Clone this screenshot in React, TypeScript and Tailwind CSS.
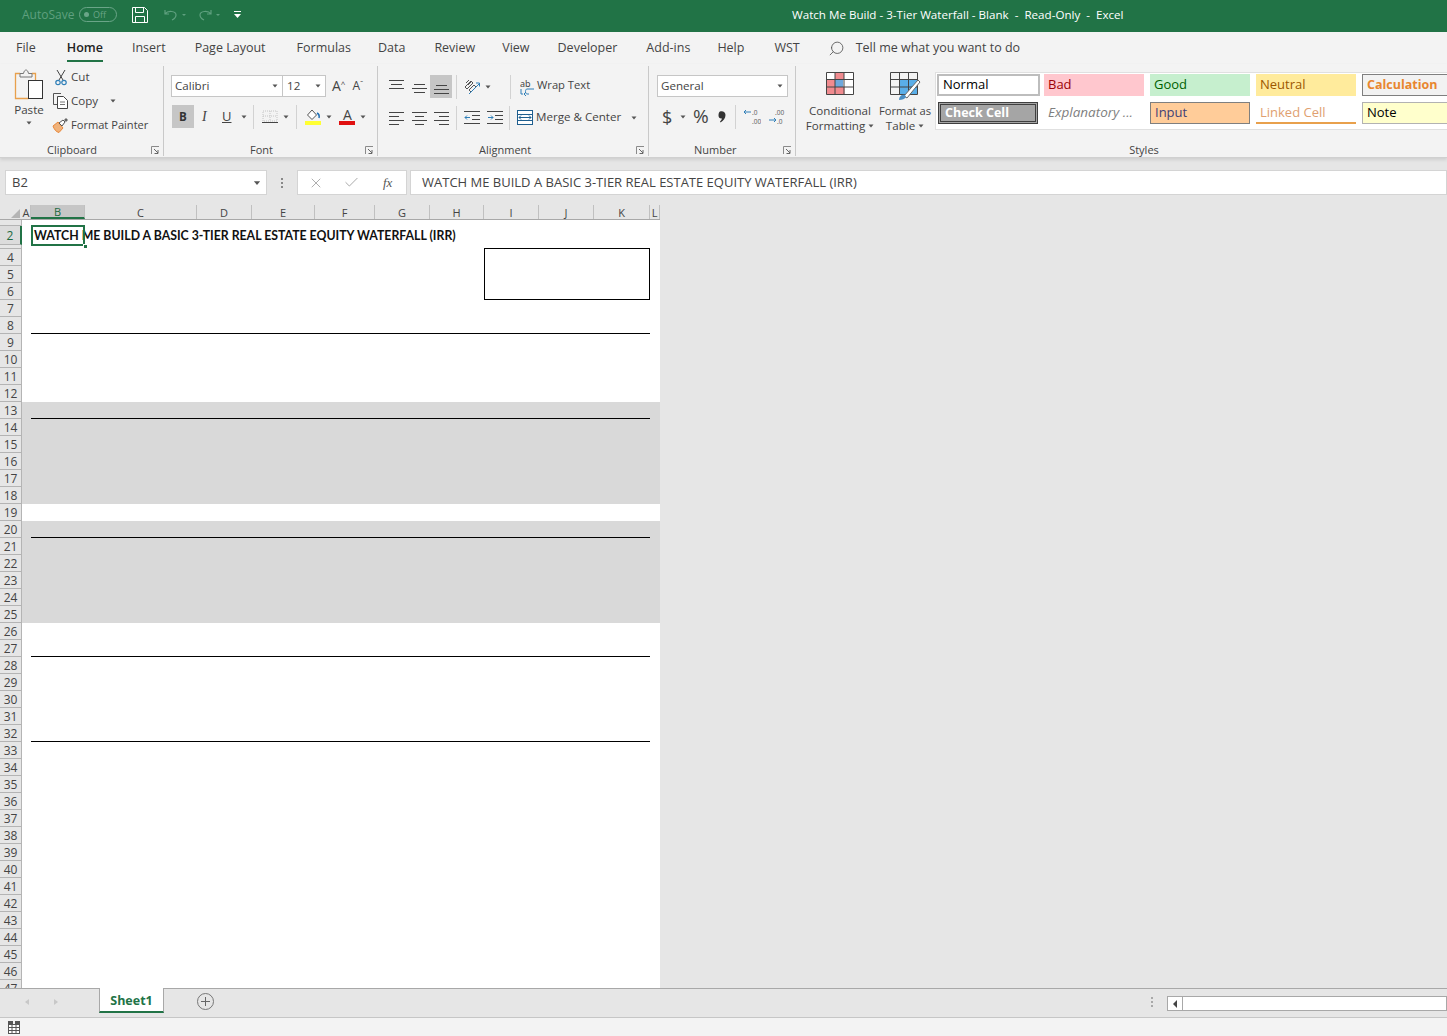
import type { ReactNode } from 'react';
import { Search, X, Check } from 'lucide-react';

const tabs = [
  { name: 'File', gap: 'ml-4' },
  { name: 'Home', gap: 'ml-[31px]' },
  { name: 'Insert', gap: 'ml-[29px]' },
  { name: 'Page Layout', gap: 'ml-[29px]' },
  { name: 'Formulas', gap: 'ml-[31px]' },
  { name: 'Data', gap: 'ml-[27px]' },
  { name: 'Review', gap: 'ml-[29px]' },
  { name: 'View', gap: 'ml-[27px]' },
  { name: 'Developer', gap: 'ml-7' },
  { name: 'Add-ins', gap: 'ml-[29px]' },
  { name: 'Help', gap: 'ml-[27px]' },
  { name: 'WST', gap: 'ml-[30px]' },
];

const columns = [
  { name: 'A', w: 'w-[9px]' },
  { name: 'B', w: 'w-[54px]' },
  { name: 'C', w: 'w-[112px]' },
  { name: 'D', w: 'w-[55px]' },
  { name: 'E', w: 'w-[63px]' },
  { name: 'F', w: 'w-[60px]' },
  { name: 'G', w: 'w-[55px]' },
  { name: 'H', w: 'w-[54px]' },
  { name: 'I', w: 'w-[55px]' },
  { name: 'J', w: 'w-[55px]' },
  { name: 'K', w: 'w-[56px]' },
  { name: 'L', w: 'w-[10px]' },
];

const underlined = [8, 13, 20, 27, 32];
const rowNumbers = Array.from({ length: 44 }, (_, i) => i + 4);

function Caret({ className = '' }: { className?: string }) {
  return (
    <svg width="6" height="4" viewBox="0 0 6 4" className={`shrink-0 ${className}`}>
      <path d="M0.5 0.5h5L3 3.5z" fill="#555" />
    </svg>
  );
}

function Launcher({ className = '' }: { className?: string }) {
  return (
    <svg width="9" height="9" viewBox="0 0 9 9" className={`shrink-0 ${className}`}>
      <path d="M0.5 8V0.5H8" fill="none" stroke="#8a8a8a" />
      <path d="M3 3l4 4M7 4v3.5H3.5" fill="none" stroke="#666" />
    </svg>
  );
}

function Sep({ className = '' }: { className?: string }) {
  return <div className={`h-[24px] w-px shrink-0 bg-[#d2d2d2] ${className}`} />;
}

function Lines({ pattern, y = 0 }: { pattern: [number, number][]; y?: number }) {
  return (
    <svg width="15" height="14" viewBox="0 0 15 14" className="shrink-0">
      {pattern.map(([x, w], i) => (
        <rect key={i} x={x} y={y + i * 4} width={w} height="1" fill="#444" />
      ))}
    </svg>
  );
}

function PasteIcon() {
  return (
    <svg width="30" height="32" viewBox="0 0 30 32">
      <path d="M6 4.500H1.500v25h13M18 4.500h3.500v7" fill="none" stroke="#e8a04c" strokeWidth="1.3" />
      <path d="M6 8V4.500h3.500C10 2 11 1 12 1s2 1 2.500 3.500H18V8z" fill="#f3f3f3" stroke="#777" />
      <rect x="14.500" y="11.500" width="14" height="18" fill="#fff" stroke="#333" />
    </svg>
  );
}

function CutIcon() {
  return (
    <svg width="12" height="17" viewBox="0 0 12 17">
      <path d="M2 1l6 10M10 1L4 11" stroke="#444" fill="none" />
      <circle cx="3" cy="13.500" r="2.200" fill="none" stroke="#2f7fb8" strokeWidth="1.200" />
      <circle cx="9" cy="13.500" r="2.200" fill="none" stroke="#2f7fb8" strokeWidth="1.200" />
    </svg>
  );
}

function CopyIcon() {
  return (
    <svg width="17" height="16" viewBox="0 0 17 16">
      <path d="M9 0.500H1.500v11H5" fill="none" stroke="#555" />
      <path d="M5.500 3.500h6l4 4v8h-10z" fill="#fff" stroke="#444" />
      <path d="M8 9h5M8 11.500h5" stroke="#777" />
    </svg>
  );
}

function PainterIcon() {
  return (
    <svg width="17" height="16" viewBox="0 0 17 16">
      <path d="M1 9l5-4 5 6-4 4.500C4 15 2 12 1 9z" fill="#f0b27a" stroke="#e8873a" />
      <path d="M7 6l4-3 2 2-3 4z" fill="#fff" stroke="#555" />
      <path d="M12 3l2-2 2 2-2 2z" fill="#666" />
    </svg>
  );
}

function BorderIcon() {
  return (
    <svg width="16" height="14" viewBox="0 0 16 14">
      <path d="M1 1h14v10H1zM8 1v10M1 6h14" fill="none" stroke="#c4c4c4" strokeDasharray="1 1" />
      <rect x="0" y="12" width="16" height="1" fill="#444" />
    </svg>
  );
}

function FillIcon() {
  return (
    <svg width="16" height="16" viewBox="0 0 16 16">
      <path d="M7 1L2.500 6 7 10.500 11.500 6z" fill="#fff" stroke="#555" />
      <path d="M12 4c2 1 2.500 3 2 5" fill="none" stroke="#1f6fb5" strokeWidth="1.500" />
      <rect x="0" y="12" width="16" height="4" fill="#ffff33" />
    </svg>
  );
}

function OrientIcon() {
  return (
    <svg width="17" height="16" viewBox="0 0 17 16">
      <path d="M1 8l6-6 2 2-6 6zM5 11l5-5 2 2-5 5z" fill="none" stroke="#555" />
      <path d="M2 4l3-3M4 6l3-3" stroke="#555" />
      <path d="M5 15L15 5M12 4h3.500v3.500" fill="none" stroke="#2f7fb8" />
    </svg>
  );
}

function IndentIcon({ flip = false }: { flip?: boolean }) {
  return (
    <svg width="16" height="13" viewBox="0 0 16 13">
      <path d="M0 0.500h16M8 4.500h8M8 8.500h8M0 12.500h16" stroke="#444" />
      <path d={flip ? 'M1 6.500h5M4 4.500l2 2-2 2' : 'M6 6.500H1M3 4.500l-2 2 2 2'} fill="none" stroke="#2f7fb8" />
    </svg>
  );
}

function WrapIcon() {
  return (
    <svg width="15" height="18" viewBox="0 0 15 18">
      <text x="0" y="9" fontSize="9" fill="#444" fontFamily="Noto Sans">ab</text>
      <path d="M1 11v5h2M14 11H7c-2 0-2 5 0 5h2M6 14l-2 2 2 2" fill="none" stroke="#2f7fb8" />
    </svg>
  );
}

function MergeIcon() {
  return (
    <svg width="16" height="15" viewBox="0 0 16 15">
      <rect x="0.500" y="0.500" width="15" height="14" fill="#fff" stroke="#1f5f8f" />
      <path d="M0.500 4.500h15M0.500 10.500h15" stroke="#1f5f8f" />
      <path d="M2 7.500h12M4 5.500l-2 2 2 2M12 5.500l2 2-2 2" fill="none" stroke="#1f5f8f" />
    </svg>
  );
}

function DecimalIcon({ more = false }: { more?: boolean }) {
  return (
    <svg width="17" height="19" viewBox="0 0 17 19">
      <text x={more ? 6 : 8} y="7.500" fontSize="6.500" fill="#666" fontFamily="Noto Sans">{more ? '.00' : '.0'}</text>
      <text x="8" y="16.500" fontSize="6.500" fill="#666" fontFamily="Noto Sans">{more ? '.0' : '.00'}</text>
      <path d={more ? 'M0 13h7M5 11l2 2-2 2' : 'M7 5H0M2 3L0 5l2 2'} fill="none" stroke="#2f7fb8" />
    </svg>
  );
}

function CommaIcon() {
  return (
    <svg width="8" height="12" viewBox="0 0 8 12">
      <path d="M2 0.500c3-1 5.500 1 5.500 3.500 0 3-2 6-5 7.500L2 10.500c1-1 1.800-2 2-3C2 8 0.500 6.500 0.500 4.500 0.500 2.500 1 1 2 0.500z" fill="#333" />
    </svg>
  );
}

function CondIcon() {
  return (
    <svg width="28" height="23" viewBox="0 0 28 23">
      <rect x="0.500" y="0.500" width="27" height="22" fill="#fff" />
      <path d="M9 0.500h9v7H9zM0.500 15h18v7.500H0.500zM0.500 7.500h9V15h-9z" fill="#f08b8f" />
      <rect x="9" y="7.500" width="8" height="7.500" fill="#6fa8dc" />
      <path d="M0.500 0.500h27v22H0.500zM0.500 7.500h27M0.500 15h27M9 0.500v22M18 0.500v22" fill="none" stroke="#444" />
    </svg>
  );
}

function TableIcon() {
  return (
    <svg width="31" height="29" viewBox="0 0 31 29">
      <path d="M10 8h18v14H10z" fill="#5aaee8" />
      <path d="M0.500 0.500h27v22H0.500zM0.500 7.500h27M0.500 15h27M9.500 0.500v22M18.500 0.500v22" fill="none" stroke="#444" />
      <path d="M14 24L28 8l2 2-13 16z" fill="#fff" stroke="#666" />
      <path d="M9 28c0-4 3-6 6-5l1 2c-1 2-4 3-7 3z" fill="#4a8fc4" />
    </svg>
  );
}

function Group({ w, label, labelClass = '', launcher, children }: { w: string; label: string; labelClass?: string; launcher?: string; children: ReactNode }) {
  return (
    <div className={`${w} mb-[1px] mt-[2px] flex shrink-0 flex-col border-r border-[#c9c9c9]`}>
      <div className="h-[78px]">{children}</div>
      <div className={`flex h-[13px] items-center pt-[2px] text-[11px] ${labelClass}`}>
        <span>{label}</span>
        {launcher && <Launcher className={launcher} />}
      </div>
    </div>
  );
}

const styleCells = [
  { text: 'Normal', cls: 'bg-white text-black border-2 border-[#bdbdbd] -ml-px !w-[103px]' },
  { text: 'Bad', cls: 'bg-[#ffc7ce] text-[#9c0006]' },
  { text: 'Good', cls: 'bg-[#c6efce] text-[#006100]' },
  { text: 'Neutral', cls: 'bg-[#ffeb9c] text-[#9c5700]' },
  { text: 'Calculation', cls: 'bg-[#f2f2f2] text-[#e8862f] text-[12.5px] font-bold border border-[#7f7f7f]' },
  { text: 'Check Cell', cls: 'bg-[#a5a5a5] text-white text-[12.5px] font-bold border-[3px] border-double border-[#3f3f3f]' },
  { text: 'Explanatory ...', cls: 'italic text-[#7f7f7f] text-[13.5px] pb-[2px]' },
  { text: 'Input', cls: 'bg-[#ffcc99] text-[#3f3f76] border border-[#7f7f7f]' },
  { text: 'Linked Cell', cls: 'text-[#e0a070] pt-[2px] border-b-2 border-[#e8a04c]' },
  { text: 'Note', cls: 'bg-[#ffffcc] text-black border border-[#b2b2b2]' },
];

function SheetRow({ n }: { n: number }) {
  const grey = (n >= 13 && n <= 18) || (n >= 20 && n <= 25);
  return (
    <div className="flex h-[17px] shrink-0">
      <div className="flex w-[22px] shrink-0 items-center justify-center border-r border-b border-[#b4b4b4] bg-[#e6e6e6] pt-[1px] text-[12px] leading-none text-[#444]">
        {n}
      </div>
      <div className={`min-w-0 flex-1 ${grey ? 'bg-[#d9d9d9]' : 'bg-white'}`}>
        {underlined.includes(n) && <div className="ml-[9px] h-full w-[619px] border-b border-black" />}
        {n === 4 && <div className="-mt-px ml-[462px] h-[18px] w-[166px] border-x border-t border-black" />}
        {n === 5 && <div className="ml-[462px] h-full w-[166px] border-x border-black" />}
        {n === 6 && <div className="ml-[462px] h-full w-[166px] border-x border-b border-black" />}
      </div>
    </div>
  );
}

export default function App() {
  return (
    <div className="flex h-screen w-full flex-col overflow-hidden bg-[#e6e6e6] font-['Open_Sans',sans-serif] text-[#444]">
      {/* title bar */}
      <div className="flex h-8 shrink-0 items-center bg-[#217346] pb-[3px] text-white">
        <span className="ml-[22px] w-[53px] text-[12px] text-[#5fa07f]">AutoSave</span>
        <div className="ml-[4px] flex h-[15px] w-[38px] items-center gap-1 rounded-full border border-[#6aa588] pl-1 text-[9px] text-[#6aa588]">
          <span className="h-[5px] w-[5px] rounded-full bg-[#6aa588]" />
          Off
        </div>
        <svg width="16" height="16" viewBox="0 0 16 16" className="ml-[15px]">
          <path d="M0.500 0.500h12l3 3v12H0.500zM3.500 0.500v5h8v-5M3.500 15.500v-6h9v6" fill="none" stroke="#fff" />
        </svg>
        <svg width="24" height="12" viewBox="0 0 24 12" className="ml-[15px] text-[#5fa07f]">
          <path d="M2 1v4h4M2 5c3-4 11-3 11 1 0 2-2 4-4 5" fill="none" stroke="currentColor" strokeWidth="1.200" />
          <path d="M19 5h4l-2 2z" fill="currentColor" />
        </svg>
        <svg width="24" height="12" viewBox="0 0 24 12" className="ml-[10px] text-[#5fa07f]">
          <path d="M14 1v4h-4M14 5C11 1 3 2 3 6c0 2 2 4 4 5" fill="none" stroke="currentColor" strokeWidth="1.200" />
          <path d="M19 5h4l-2 2z" fill="currentColor" />
        </svg>
        <svg width="7" height="8" viewBox="0 0 7 8" className="ml-[13px]">
          <path d="M0 0h7v1H0zM0 3h7L3.500 7z" fill="#fff" />
        </svg>
        <span className="ml-[551px] whitespace-pre text-[11.6px] text-white">Watch Me Build - 3-Tier Waterfall - Blank  -  Read-Only  -  Excel</span>
      </div>

      {/* ribbon tabs */}
      <div className="flex h-8 shrink-0 items-center bg-[#f3f3f3] text-[12.5px]">
        {tabs.map(t => (
          <div key={t.name} className={`relative ${t.gap} ${t.name === 'Home' ? 'font-semibold text-[#222]' : ''}`}>
            {t.name}
            {t.name === 'Home' && <div className="absolute -bottom-[5px] left-0 h-[2px] w-full bg-[#217346]" />}
          </div>
        ))}
        <Search size={17} strokeWidth={1.2} className="ml-[28px] -scale-x-100 text-[#555]" />
        <span className="ml-[11px]">Tell me what you want to do</span>
      </div>

      {/* ribbon */}
      <div className="flex h-[94px] shrink-0 border-b border-[#d0d0d0] bg-[#f3f3f3] text-[11.6px] shadow-[0_2px_3px_#cfcfcf]">
        <Group w="w-[164px]" label="Clipboard" labelClass="pl-[47px]" launcher="ml-[54px]">
          <div className="flex">
            <div className="ml-[14px] flex w-[30px] flex-col items-center pt-[3px]">
              <PasteIcon />
              <span className="mt-[1px] leading-[16px]">Paste</span>
              <Caret className="mt-[3px]" />
            </div>
            <div className="-mt-px ml-[8px] flex flex-col">
              <div className="flex h-[24px] items-center">
                <span className="ml-[3px] w-[16px]"><CutIcon /></span>
                <span>Cut</span>
              </div>
              <div className="flex h-[24px] items-center">
                <CopyIcon />
                <span className="ml-[2px]">Copy</span>
                <Caret className="ml-[12px]" />
              </div>
              <div className="flex h-[24px] items-center">
                <PainterIcon />
                <span className="ml-[2px] whitespace-nowrap text-[11.1px]">Format Painter</span>
              </div>
            </div>
          </div>
        </Group>

        <Group w="w-[214px]" label="Font" labelClass="pl-[86px]" launcher="ml-[92px]">
          <div className="flex flex-col pl-[7px] pt-[9px]">
            <div className="flex h-[22px] items-center">
              <div className="flex h-full w-[112px] items-center justify-between border border-[#c6c6c6] bg-white pl-[3px] pr-[4px]">
                Calibri <Caret />
              </div>
              <div className="-ml-px flex h-full w-[44px] items-center justify-between border border-[#c6c6c6] bg-white pl-[4px] pr-[4px]">
                12 <Caret />
              </div>
              <span className="ml-[6px] text-[14px] leading-none">A<sup className="text-[8px]">^</sup></span>
              <span className="ml-[7px] text-[12px] leading-none">A<sup className="text-[8px]">ˇ</sup></span>
            </div>
            <div className="mt-[8px] flex h-[23px] items-center">
              <div className="ml-[1px] flex h-full w-[22px] items-center justify-center bg-[#c6c6c6] font-bold text-[#333]">B</div>
              <span className="ml-[8px] w-[8px] font-['Liberation_Serif',serif] text-[14px] italic">I</span>
              <span className="ml-[12px] text-[13px] underline">U</span>
              <Caret className="ml-[10px]" />
              <Sep className="ml-[6px]" />
              <span className="ml-[8px]"><BorderIcon /></span>
              <Caret className="ml-[5px]" />
              <Sep className="ml-[7px]" />
              <span className="ml-[8px]"><FillIcon /></span>
              <Caret className="ml-[5px]" />
              <div className="ml-[7px] flex w-[16px] flex-col items-center">
                <span className="text-[14px] leading-[13px] text-[#444]">A</span>
                <span className="h-[4px] w-[16px] bg-[#e01010]" />
              </div>
              <Caret className="ml-[5px]" />
            </div>
          </div>
        </Group>

        <Group w="w-[271px]" label="Alignment" labelClass="pl-[101px]" launcher="ml-[105px]">
          <div className="flex flex-col pl-[11px] pt-[9px]">
            <div className="flex h-[23px] items-center">
              <Lines pattern={[[0, 15], [2, 11], [0, 15]]} y={0} />
              <span className="ml-[8px]"><Lines pattern={[[2, 11], [0, 15], [2, 11]]} y={4} /></span>
              <div className="ml-[3px] flex h-full w-[22px] items-center justify-center bg-[#c6c6c6]">
                <Lines pattern={[[2, 11], [0, 15], [0, 15]]} y={5} />
              </div>
              <Sep className="ml-[4px]" />
              <span className="ml-[7px]"><OrientIcon /></span>
              <Caret className="ml-[4px]" />
              <Sep className="ml-[19px]" />
              <span className="ml-[9px]"><WrapIcon /></span>
              <span className="ml-[2px] whitespace-nowrap pb-[3px] text-[11.2px]">Wrap Text</span>
            </div>
            <div className="mt-[8px] flex h-[23px] items-center">
              <Lines pattern={[[0, 15], [0, 10], [0, 15], [0, 10]]} y={1} />
              <span className="ml-[8px]"><Lines pattern={[[0, 15], [3, 9], [0, 15], [3, 9]]} y={1} /></span>
              <span className="ml-[7px]"><Lines pattern={[[0, 15], [5, 10], [0, 15], [5, 10]]} y={1} /></span>
              <Sep className="ml-[7px]" />
              <span className="ml-[7px]"><IndentIcon /></span>
              <span className="ml-[7px]"><IndentIcon flip /></span>
              <Sep className="ml-[6px]" />
              <span className="ml-[7px]"><MergeIcon /></span>
              <span className="ml-[3px] whitespace-nowrap pb-[2px]">Merge &amp; Center</span>
              <Caret className="ml-[10px]" />
            </div>
          </div>
        </Group>

        <Group w="w-[147px]" label="Number" labelClass="pl-[45px]" launcher="ml-[46px]">
          <div className="flex flex-col pl-[8px] pt-[9px]">
            <div className="flex h-[22px] w-[131px] items-center justify-between border border-[#c6c6c6] bg-white pl-[3px] pr-[4px]">
              General <Caret />
            </div>
            <div className="mt-[8px] flex h-[23px] items-center">
              <span className="ml-[5px] w-[10px] text-[18px] leading-none">$</span>
              <Caret className="ml-[8px]" />
              <span className="ml-[7px] text-[19px] leading-none">%</span>
              <span className="ml-[9px]"><CommaIcon /></span>
              <Sep className="ml-[9px]" />
              <span className="ml-[8px]"><DecimalIcon /></span>
              <span className="ml-[8px]"><DecimalIcon more /></span>
            </div>
          </div>
        </Group>

        <div className="mb-[1px] mt-[2px] flex w-[696px] shrink-0 flex-col">
          <div className="flex h-[78px]">
            <div className="ml-[9px] flex w-[70px] flex-col items-center pt-[6px] leading-[15px]">
              <CondIcon />
              <span className="mt-[8px]">Conditional</span>
              <span className="flex items-center gap-[3px]">Formatting <Caret /></span>
            </div>
            <div className="ml-[3px] flex w-[54px] flex-col items-center pt-[6px] leading-[15px]">
              <TableIcon />
              <span className="mt-[2px] whitespace-nowrap text-[11.2px]">Format as</span>
              <span className="flex items-center gap-[3px]">Table <Caret /></span>
            </div>
            <div className="ml-[3px] mt-[6px] h-[58px] flex-1 border border-[#e0e0e0] bg-white pl-[2px] pt-[1px] text-[13px]">
              <div className="grid grid-cols-[100px_100px_100px_100px_100px] gap-x-[6px] gap-y-[6px]">
                {styleCells.map(c => (
                  <div key={c.text} className={`flex h-[22px] w-[100px] items-center whitespace-nowrap pl-[4px] ${c.cls}`}>
                    {c.text}
                  </div>
                ))}
              </div>
            </div>
          </div>
          <div className="flex h-[13px] items-center justify-center pt-[2px] text-[11px]">Styles</div>
        </div>
      </div>

      {/* formula bar */}
      <div className="mt-[12px] flex h-[25px] shrink-0 items-stretch text-[13px]">
        <div className="ml-[5px] flex w-[262px] items-center justify-between border border-[#d4d4d4] bg-white pl-[6px] pr-[6px]">
          B2 <Caret className="scale-125" />
        </div>
        <div className="flex w-[30px] flex-col items-center justify-center gap-[2px]">
          <span className="h-[2px] w-[2px] bg-[#888]" />
          <span className="h-[2px] w-[2px] bg-[#888]" />
          <span className="h-[2px] w-[2px] bg-[#888]" />
        </div>
        <div className="flex w-[110px] items-center border border-[#d4d4d4] bg-white text-[#a8a8a8]">
          <X size={16} strokeWidth={1.4} className="ml-[10px]" />
          <Check size={17} strokeWidth={1.4} className="ml-[19px]" />
          <span className="ml-[23px] font-['Liberation_Serif',serif] text-[13px] italic text-[#555]">fx</span>
        </div>
        <div className="ml-[3px] flex flex-1 items-center whitespace-nowrap border border-[#d4d4d4] bg-white pl-[11px]">
          WATCH ME BUILD A BASIC 3-TIER REAL ESTATE EQUITY WATERFALL (IRR)
        </div>
      </div>

      {/* worksheet */}
      <div className="mt-[10px] flex min-h-0 flex-1 overflow-hidden">
        <div className="flex w-[660px] shrink-0 flex-col overflow-hidden">
          <div className="flex h-[15px] shrink-0 border-b border-[#a8a8a8] bg-[#e6e6e6] text-[11px] leading-none">
            <div className="flex w-[22px] shrink-0 items-end justify-end pb-[1px] pr-[2px]">
              <div className="h-0 w-0 border-b-[9px] border-l-[9px] border-b-[#b4b4b4] border-l-transparent" />
            </div>
            {columns.map(c => (
              <div
                key={c.name}
                className={`flex ${c.w} shrink-0 items-center justify-center border-r border-[#c0c0c0] ${c.name === 'B' ? 'border-b-2 border-b-[#217346] bg-[#c6c6c6] text-[#1d6b40]' : 'pt-[1px]'}`}
              >
                {c.name}
              </div>
            ))}
          </div>

          <div className="flex h-[6px] shrink-0">
            <div className="w-[22px] shrink-0 border-r border-b border-[#b4b4b4] bg-[#e6e6e6]" />
            <div className="flex-1 bg-white" />
          </div>
          <div className="flex h-[19px] shrink-0">
            <div className="flex w-[22px] shrink-0 items-center justify-center border-r-2 border-b border-[#217346] border-b-[#b4b4b4] bg-[#dcdcdc] pt-[1px] text-[12px] leading-none text-[#1d6b40]">
              2
            </div>
            <div className="relative flex-1 bg-white">
              <span className="absolute left-[12px] top-[2px] whitespace-nowrap font-['Lato',sans-serif] text-[12.3px] font-bold leading-[16px] text-[#111]">
                WATCH ME BUILD A BASIC 3-TIER REAL ESTATE EQUITY WATERFALL (IRR)
              </span>
              <div className="absolute -top-[1px] left-[9px] h-[21px] w-[54px] border-2 border-[#217346]" />
              <div className="absolute left-[61px] top-[18px] h-[5px] w-[5px] border border-white bg-[#217346]" />
            </div>
          </div>
          <div className="flex h-[4px] shrink-0 overflow-hidden">
            <div className="w-[22px] shrink-0 border-r border-b border-[#b4b4b4] bg-[#e6e6e6]" />
            <div className="flex-1 bg-white" />
          </div>
          {rowNumbers.map(n => (
            <SheetRow key={n} n={n} />
          ))}
        </div>
        <div className="flex-1 bg-[#e6e6e6]" />
      </div>

      {/* sheet tabs */}
      <div className="flex h-[29px] shrink-0 items-start border-t border-[#a8a8a8] bg-[#e6e6e6]">
        <span className="ml-[25px] mt-[10px] h-0 w-0 border-y-[3px] border-r-[4px] border-y-transparent border-r-[#c8c8c8]" />
        <span className="ml-[25px] mt-[10px] h-0 w-0 border-y-[3px] border-l-[4px] border-y-transparent border-l-[#c8c8c8]" />
        <div className="-mt-px ml-[41px] flex h-[25px] w-[65px] items-center justify-center border-x border-b-2 border-[#a8a8a8] border-b-[#217346] bg-white pt-[4px] text-[12.5px] font-bold text-[#217346]">
          Sheet1
        </div>
        <div className="ml-[33px] mt-[4px] flex h-[17px] w-[17px] items-center justify-center rounded-full border border-[#777] text-[#666]">
          <svg width="9" height="9" viewBox="0 0 9 9">
            <path d="M4.500 0v9M0 4.500h9" stroke="currentColor" />
          </svg>
        </div>
        <div className="ml-[937px] mt-[8px] flex flex-col gap-[2px]">
          <span className="h-[2px] w-[2px] bg-[#a8a8a8]" />
          <span className="h-[2px] w-[2px] bg-[#a8a8a8]" />
          <span className="h-[2px] w-[2px] bg-[#a8a8a8]" />
        </div>
        <div className="ml-[14px] mt-[7px] flex h-[15px] flex-1 border border-[#a8a8a8] bg-white">
          <div className="flex w-[15px] items-center justify-center border-r border-[#a8a8a8]">
            <span className="h-0 w-0 border-y-[4px] border-r-[4px] border-y-transparent border-r-[#444]" />
          </div>
        </div>
      </div>

      {/* status bar */}
      <div className="flex h-[19px] shrink-0 items-center border-t border-[#c6c6c6] bg-[#f3f3f3] pl-[7px]">
        <svg width="14" height="13" viewBox="0 0 14 13">
          <rect x="1.500" y="3.500" width="11" height="9" fill="#fff" stroke="#555" />
          <path d="M1.500 6.500h11M1.500 9.500h11M5 3.500v9M9 3.500v9" stroke="#555" />
          <rect x="1" y="0" width="5" height="3" fill="#555" />
          <rect x="8" y="0" width="5" height="3" fill="#555" />
        </svg>
      </div>
    </div>
  );
}
